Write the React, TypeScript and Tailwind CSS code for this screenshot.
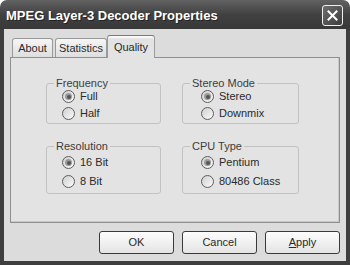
import React from "react";

const Radio = ({ checked }: { checked: boolean }) => (
  <span className="w-[13px] h-[13px] shrink-0 rounded-full border border-[#5e5e5e] bg-linear-to-br from-[#cfcfcf] to-[#fbfbfb] flex items-center justify-center">
    {checked && (
      <span className="w-[7px] h-[7px] rounded-full bg-[#9a9a9a] flex items-center justify-center">
        <span className="w-[4px] h-[4px] rounded-full bg-[#555555]" />
      </span>
    )}
  </span>
);

const Row = ({ label, checked, h }: { label: string; checked: boolean; h: string }) => (
  <div className={`flex items-center gap-[5px] ${h}`}>
    <Radio checked={checked} />
    <span className="text-[11px] leading-[13px] text-[#2a2a2a]">{label}</span>
  </div>
);

const Group = ({
  title,
  items,
  width,
  pl,
  tall,
}: {
  title: string;
  items: [string, boolean][];
  width: string;
  pl: string;
  tall: boolean;
}) => (
  <div className={`${width} border border-[#c2c2c2] rounded-[3px] ${tall ? "pb-[2px]" : "pb-[1px]"}`}>
    <div className="-mt-[7px] ml-[7px] px-[2px] w-fit bg-[#e3e3e3] text-[11px] leading-[13px] text-[#3c3c3c]">
      {title}
    </div>
    <div className={`${pl} ${tall ? "" : "-mt-[2px]"}`}>
      {items.map(([l, c]) => (
        <Row key={l} label={l} checked={c} h={tall ? "h-[19px]" : "h-[17px]"} />
      ))}
    </div>
  </div>
);

const Button = ({ children }: { children: React.ReactNode }) => (
  <button className="w-[75px] h-[23px] rounded-[3px] border border-[#3a3a3a] bg-linear-to-b from-[#fdfdfd] to-[#e4e4e4] text-[11px] text-[#2a2a2a] flex items-center justify-center">
    {children}
  </button>
);

export default function App() {
  return (
    <div
      className="w-[350px] h-[265px] flex flex-col bg-white"
      style={{ fontFamily: '"Liberation Sans", Arial, sans-serif' }}
    >
      <div className="h-[29px] rounded-t-[7px] bg-linear-to-b from-[#626262] via-[#414141] to-[#383838] flex items-start justify-between pl-[6px] pr-[7px] pt-[5px]">
        <span className="text-white font-bold text-[13px] leading-[21px] [text-shadow:1px_1px_0_#222]">
          MPEG Layer-3 Decoder Properties
        </span>
        <div className="w-[21px] h-[21px] rounded-[3px] border border-[#f0f0f0] bg-linear-to-br from-[#6e6e6e] to-[#3c3c3c] flex items-center justify-center">
          <svg width="11" height="11" viewBox="0 0 11 11">
            <path d="M1.5 1.5 L9.5 9.5 M9.5 1.5 L1.5 9.5" stroke="white" strokeWidth="2" strokeLinecap="square" />
          </svg>
        </div>
      </div>
      <div className="flex-1 flex flex-col border-x-4 border-b-4 border-[#3e3e3e] bg-[#dcdcdc] px-[6px] pt-[6px] pb-[7px]">
        <div className="flex items-end h-[22px] pl-[2px] text-[11px] text-[#2a2a2a]">
          <div className="w-[41px] h-[19px] border border-b-0 border-[#9a9a9a] rounded-t-[3px] bg-linear-to-b from-[#f6f6f6] to-[#dedede] flex items-center justify-center mr-[2px]">
            About
          </div>
          <div className="w-[52px] h-[19px] border border-b-0 border-[#9a9a9a] rounded-t-[3px] bg-linear-to-b from-[#f6f6f6] to-[#dedede] flex items-center justify-center">
            Statistics
          </div>
          <div className="relative z-10 -mb-[1px] w-[48px] h-[23px] border border-b-0 border-[#9a9a9a] border-t-[#7a7a7a] rounded-t-[3px] bg-[#e3e3e3] flex items-center justify-center shadow-[inset_0_2px_0_#f8f8f8]">
            Quality
          </div>
        </div>
        <div className="h-[166px] border border-[#8f8f8f] bg-[#e3e3e3] pt-[25px] pl-[35px] shadow-[inset_-1px_-1px_0_#c8c8c8]">
          <div className="flex gap-[21px]">
            <Group title="Frequency" items={[["Full", true], ["Half", false]]} width="w-[115px]" pl="pl-[15px]" tall={false} />
            <Group title="Stereo Mode" items={[["Stereo", true], ["Downmix", false]]} width="w-[117px]" pl="pl-[18px]" tall={false} />
          </div>
          <div className="flex gap-[21px] mt-[22px]">
            <Group title="Resolution" items={[["16 Bit", true], ["8 Bit", false]]} width="w-[115px]" pl="pl-[15px]" tall={true} />
            <Group title="CPU Type" items={[["Pentium", true], ["80486 Class", false]]} width="w-[117px]" pl="pl-[18px]" tall={true} />
          </div>
        </div>
        <div className="flex justify-end gap-[8px] mt-[8px]">
          <Button>OK</Button>
          <Button>Cancel</Button>
          <Button>
            <span>
              <span className="underline">A</span>pply
            </span>
          </Button>
        </div>
      </div>
    </div>
  );
}
